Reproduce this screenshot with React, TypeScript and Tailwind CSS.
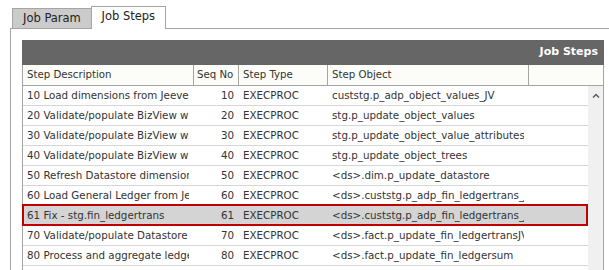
import React from 'react';

interface Step {
  desc: string;
  seq: number;
  type: string;
  obj: string;
}

const steps: Step[] = [
  { desc: '10 Load dimensions from Jeeves', seq: 10, type: 'EXECPROC', obj: 'custstg.p_adp_object_values_JV' },
  { desc: '20 Validate/populate BizView with', seq: 20, type: 'EXECPROC', obj: 'stg.p_update_object_values' },
  { desc: '30 Validate/populate BizView with', seq: 30, type: 'EXECPROC', obj: 'stg.p_update_object_value_attributes' },
  { desc: '40 Validate/populate BizView with', seq: 40, type: 'EXECPROC', obj: 'stg.p_update_object_trees' },
  { desc: '50 Refresh Datastore dimensions', seq: 50, type: 'EXECPROC', obj: '<ds>.dim.p_update_datastore' },
  { desc: '60 Load General Ledger from Jeeves', seq: 60, type: 'EXECPROC', obj: '<ds>.custstg.p_adp_fin_ledgertrans_JV' },
  { desc: '61 Fix - stg.fin_ledgertrans', seq: 61, type: 'EXECPROC', obj: '<ds>.custstg.p_adp_fin_ledgertrans_JV' },
  { desc: '70 Validate/populate Datastore with', seq: 70, type: 'EXECPROC', obj: '<ds>.fact.p_update_fin_ledgertransJV' },
  { desc: '80 Process and aggregate ledger', seq: 80, type: 'EXECPROC', obj: '<ds>.fact.p_update_fin_ledgersum' },
  { desc: '90 Finalize', seq: 90, type: 'EXECPROC', obj: '<ds>.fact.p_finalize' },
];

const SELECTED = 61;

export default function App() {
  return (
    <div className="w-[609px] h-[270px] overflow-hidden bg-white text-[#333] font-['DejaVu_Sans',sans-serif]">
      {/* Tabs */}
      <div className="flex items-end h-[28px] pl-[12px]">
        <div className="h-[20px] px-[10px] flex items-center bg-[#cbcbcb] border-l border-t border-[#a5a5a5] text-[11.5px] text-[#222]">
          Job Param
        </div>
        <div className="relative z-10 -mb-px h-[23px] w-[75px] flex items-center justify-center pb-[3px] bg-white border-x border-t border-[#a5a5a5] text-[11.5px] text-[#222]">
          Job Steps
        </div>
      </div>

      {/* Panel */}
      <div className="ml-[10px] w-[620px] h-[260px] border-l border-t border-[#a5a5a5] pt-[11px] pl-[11px]">
        <div className="w-[582px]">
          <div className="h-[25px] bg-[#666666] flex items-center justify-end pr-[6px] text-white font-bold text-[11px]">
            Job Steps
          </div>

          {/* Column headers */}
          <div className="flex h-[21px] bg-[#fcfcf8] border-x border-b border-[#a5a5a5] text-[10.2px] text-[#333]">
            <div className="w-[171px] border-r border-[#a5a5a5] pl-[4px] flex items-center">Step Description</div>
            <div className="w-[45px] border-r border-[#a5a5a5] pl-[3px] flex items-center">Seq No</div>
            <div className="w-[89px] border-r border-[#a5a5a5] pl-[4px] flex items-center">Step Type</div>
            <div className="w-[201px] border-r border-[#a5a5a5] pl-[4px] flex items-center">Step Object</div>
            <div className="flex-1" />
          </div>

          {/* Body */}
          <div className="flex h-[200px] border-x border-[#a5a5a5]">
            <div className="w-[565px]">
              {steps.map((s) => {
                const sel = s.seq === SELECTED;
                return (
                  <div
                    key={s.seq}
                    className={`relative flex h-[20px] border-b border-[#d6d6d6] text-[10.3px] text-[#333] ${sel ? 'bg-[#d4d4d4]' : 'bg-white'}`}
                  >
                    <div className="w-[171px] pl-[4px] pr-[5px] flex items-center">
                      <div className="overflow-hidden whitespace-nowrap w-full">{s.desc}</div>
                    </div>
                    <div className="w-[45px] pr-[5px] flex items-center justify-end">{s.seq}</div>
                    <div className="w-[89px] pl-[4px] flex items-center">{s.type}</div>
                    <div className="w-[201px] pl-[4px] pr-[5px] flex items-center">
                      <div className="overflow-hidden whitespace-nowrap w-full">{s.obj}</div>
                    </div>
                    <div className="flex-1" />
                    {sel && (
                      <div className="absolute -left-px right-0 -top-[2px] -bottom-[1px] border-2 border-[#c00000] pointer-events-none" />
                    )}
                  </div>
                );
              })}
            </div>
            {/* Scrollbar */}
            <div className="w-[15px] bg-[#f0f0f0] flex justify-center pt-[7px]">
              <svg width="8" height="5" viewBox="0 0 8 5" className="block">
                <polyline points="1,4.5 4,1.5 7,4.5" fill="none" stroke="#606060" strokeWidth="1.5" />
              </svg>
            </div>
          </div>
        </div>
      </div>
    </div>
  );
}
